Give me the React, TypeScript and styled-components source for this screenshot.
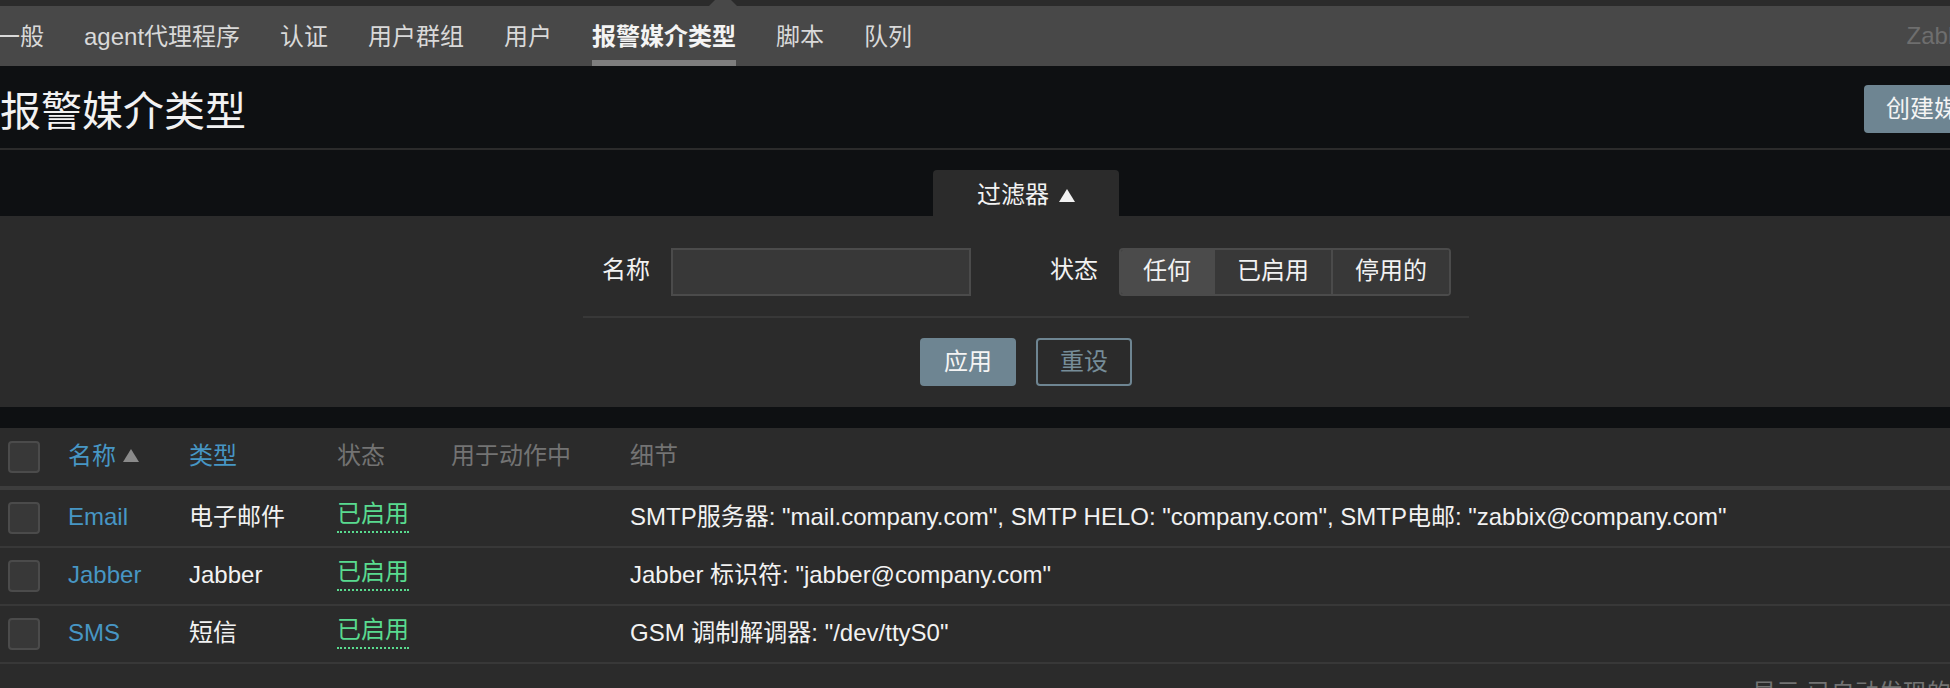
import React from 'react';
import styled, { createGlobalStyle } from 'styled-components';

const FONT = `"Liberation Sans", "Noto Sans CJK SC", Arial, sans-serif`;

const GlobalStyle = createGlobalStyle`
  html, body { margin: 0; padding: 0; background: #0e1012; overflow: hidden; }
  body { font-family: ${FONT}; font-size: 24px; line-height: 28px; color: #f2f2f2; }
  *, *::before, *::after { box-sizing: border-box; }
`;

const Viewport = styled.div`
  width: 1950px;
  height: 688px;
  overflow: hidden;
  background: #0e1012;
`;

const Page = styled.div`
  width: 2092px;
  margin-left: -20px;
`;

const TopStrip = styled.div`
  height: 6px;
  background: #2b2b2b;
  position: relative;
`;

const MenuArrow = styled.div<{ $left: number }>`
  position: absolute;
  left: ${(p) => p.$left}px;
  bottom: 0;
  width: 0;
  height: 0;
  border-left: 14px solid transparent;
  border-right: 14px solid transparent;
  border-bottom: 14px solid #484848;
`;

const SubNav = styled.nav`
  height: 60px;
  background: #484848;
  display: flex;
  align-items: flex-start;
  gap: 40px;
  padding: 0 20px 0 16px;
`;

const NavTab = styled.a<{ $active?: boolean }>`
  display: block;
  height: 60px;
  padding-top: 8px;
  line-height: 46px;
  border-bottom: 6px solid ${(p) => (p.$active ? '#7e7e7e' : 'transparent')};
  color: ${(p) => (p.$active ? '#f4f4f4' : '#d9d9d9')};
  font-weight: ${(p) => (p.$active ? 700 : 400)};
  white-space: nowrap;
  text-decoration: none;
`;

const ServerName = styled.span`
  margin-left: auto;
  line-height: 60px;
  color: #6e6e6e;
  white-space: nowrap;
`;

const Header = styled.header`
  height: 84px;
  padding: 9px 20px 0;
  display: flex;
  align-items: center;
  justify-content: space-between;
  border-bottom: 2px solid #2b2b2b;
`;

const Title = styled.h1`
  margin: 0;
  font-size: 41px;
  font-weight: 400;
  line-height: 48px;
  color: #f2f2f2;
`;

const PrimaryButton = styled.button<{ $pad?: number }>`
  height: 48px;
  padding: 0 ${(p) => p.$pad ?? 22}px;
  border: none;
  border-radius: 4px;
  background: #6e8592;
  color: #f4f4f4;
  font-family: ${FONT};
  font-size: 24px;
  line-height: 48px;
  white-space: nowrap;
`;

const HeaderButton = styled(PrimaryButton)`
  margin-top: -6px;
`;

const OutlineButton = styled.button`
  height: 48px;
  padding: 0 22px;
  border: 2px solid #6e8592;
  border-radius: 4px;
  background: transparent;
  color: #768d99;
  font-family: ${FONT};
  font-size: 24px;
  line-height: 44px;
  white-space: nowrap;
`;

const FilterSection = styled.section`
  margin-top: 20px;
`;

const FilterTabRow = styled.div`
  display: flex;
  justify-content: center;
`;

const FilterTab = styled.div`
  width: 186px;
  height: 46px;
  padding-top: 4px;
  display: flex;
  align-items: center;
  justify-content: center;
  gap: 10px;
  background: #2b2b2b;
  border-radius: 4px 4px 0 0;
  color: #f2f2f2;
`;

const FilterPanel = styled.div`
  background: #2b2b2b;
  padding: 32px 0 21px;
`;

const FormBox = styled.div`
  width: 886px;
  margin: 0 auto;
`;

const FormRow = styled.div`
  display: flex;
  gap: 60px;
`;

const FieldGroup = styled.div`
  display: flex;
  align-items: center;
  gap: 21px;
`;

const FieldLabel = styled.label`
  width: 67px;
  text-align: right;
  color: #f2f2f2;
  white-space: nowrap;
  line-height: 28px;
  margin-top: -4px;
`;

const TextInput = styled.input`
  width: 300px;
  height: 48px;
  background: #383838;
  border: 2px solid #4b4b4b;
  color: #f2f2f2;
  font-family: ${FONT};
  font-size: 24px;
  padding: 0 8px;
  outline: none;
`;

const Segmented = styled.div`
  display: flex;
  height: 48px;
  border: 2px solid #4b4b4b;
  border-radius: 4px;
  overflow: hidden;
`;

const Segment = styled.span<{ $active?: boolean }>`
  padding: 0 22px;
  line-height: 42px;
  background: ${(p) => (p.$active ? '#4b4b4b' : '#383838')};
  color: #f2f2f2;
  white-space: nowrap;
  & + & {
    border-left: 2px solid #4b4b4b;
  }
`;

const Divider = styled.div`
  height: 2px;
  background: #383838;
  margin-top: 20px;
`;

const ButtonRow = styled.div`
  display: flex;
  justify-content: center;
  gap: 20px;
  margin-top: 20px;
`;

const ListSection = styled.section`
  margin-top: 21px;
  background: #2b2b2b;
  padding: 0 20px;
  height: 400px;
`;

const GridRow = styled.div<{ $head?: boolean }>`
  display: grid;
  grid-template-columns: 58px 121px 148px 114px 179px 1fr;
  align-items: center;
  height: ${(p) => (p.$head ? 62 : 58)}px;
  border-bottom: ${(p) => (p.$head ? 4 : 2)}px solid ${(p) => (p.$head ? '#3d3d3d' : '#383838')};
`;

const Cell = styled.div<{ $tone?: 'link' | 'muted' | 'text' }>`
  padding-left: 10px;
  white-space: nowrap;
  display: flex;
  align-items: center;
  gap: 7px;
  line-height: 28px;
  margin-top: -3px;
  color: ${(p) =>
    p.$tone === 'link' ? '#4796c4' : p.$tone === 'muted' ? '#737373' : '#f2f2f2'};
  &:first-child {
    padding-left: 8px;
    margin-top: 0;
  }
`;

const CheckBox = styled.span`
  display: block;
  width: 32px;
  height: 32px;
  background: #383838;
  border: 2px solid #4b4b4b;
  border-radius: 4px;
`;

const StatusLink = styled.span`
  color: #59db8f;
  border-bottom: 2px dotted #59db8f;
  padding-bottom: 3px;
  line-height: 28px;
`;

const Footer = styled.div`
  padding: 15px 20px 0;
  text-align: right;
  color: #737373;
  white-space: nowrap;
`;

const UpArrow = ({ color, w = 16, h = 13 }: { color: string; w?: number; h?: number }) => (
  <svg width={w} height={h} viewBox="0 0 16 13" style={{ display: 'block' }}>
    <polygon points="8,0 16,13 0,13" fill={color} />
  </svg>
);

const tabs = ['一般', 'agent代理程序', '认证', '用户群组', '用户', '报警媒介类型', '脚本', '队列'];

const rows = [
  { name: 'Email', type: '电子邮件', detail: 'SMTP服务器: "mail.company.com", SMTP HELO: "company.com", SMTP电邮: "zabbix@company.com"' },
  { name: 'Jabber', type: 'Jabber', detail: 'Jabber 标识符: "jabber@company.com"' },
  { name: 'SMS', type: '短信', detail: 'GSM 调制解调器: "/dev/ttyS0"' },
];

export default function App() {
  return (
    <Viewport>
      <GlobalStyle />
      <Page>
        <TopStrip>
          <MenuArrow $left={729} />
        </TopStrip>
        <SubNav>
          {tabs.map((t) => (
            <NavTab key={t} $active={t === '报警媒介类型'}>
              {t}
            </NavTab>
          ))}
          <ServerName>Zabbix server</ServerName>
        </SubNav>
        <Header>
          <Title>报警媒介类型</Title>
          <HeaderButton>创建媒介类型</HeaderButton>
        </Header>
        <FilterSection>
          <FilterTabRow>
            <FilterTab>
              <span>过滤器</span>
              <UpArrow color="#f2f2f2" />
            </FilterTab>
          </FilterTabRow>
          <FilterPanel>
            <FormBox>
              <FormRow>
                <FieldGroup>
                  <FieldLabel>名称</FieldLabel>
                  <TextInput type="text" />
                </FieldGroup>
                <FieldGroup>
                  <FieldLabel>状态</FieldLabel>
                  <Segmented>
                    <Segment $active>任何</Segment>
                    <Segment>已启用</Segment>
                    <Segment>停用的</Segment>
                  </Segmented>
                </FieldGroup>
              </FormRow>
              <Divider />
              <ButtonRow>
                <PrimaryButton $pad={24}>应用</PrimaryButton>
                <OutlineButton>重设</OutlineButton>
              </ButtonRow>
            </FormBox>
          </FilterPanel>
        </FilterSection>
        <ListSection>
          <GridRow $head>
            <Cell>
              <CheckBox />
            </Cell>
            <Cell $tone="link">
              名称
              <UpArrow color="#8a8a8a" />
            </Cell>
            <Cell $tone="link">类型</Cell>
            <Cell $tone="muted">状态</Cell>
            <Cell $tone="muted">用于动作中</Cell>
            <Cell $tone="muted">细节</Cell>
          </GridRow>
          {rows.map((r) => (
            <GridRow key={r.name}>
              <Cell>
                <CheckBox />
              </Cell>
              <Cell $tone="link">{r.name}</Cell>
              <Cell>{r.type}</Cell>
              <Cell>
                <StatusLink>已启用</StatusLink>
              </Cell>
              <Cell />
              <Cell>{r.detail}</Cell>
            </GridRow>
          ))}
          <Footer>显示 已自动发现的 3中的3</Footer>
        </ListSection>
      </Page>
    </Viewport>
  );
}
